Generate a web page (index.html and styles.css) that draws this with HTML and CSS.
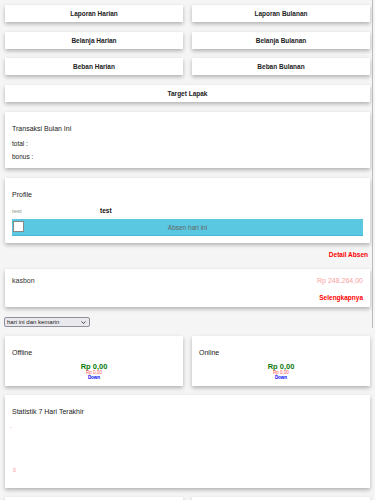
FILE: index.html
```html
<!DOCTYPE html>
<html lang="id">
<head>
  <meta charset="UTF-8">
  <title>Dashboard Lapak</title>
  <link rel="stylesheet" href="styles.css">
</head>
<body>

<div class="page">
  <div class="menu">
    <div class="btn">Laporan Harian</div>
    <div class="btn">Laporan Bulanan</div>
    <div class="btn">Belanja Harian</div>
    <div class="btn">Belanja Bulanan</div>
    <div class="btn">Beban Harian</div>
    <div class="btn">Beban Bulanan</div>
    <div class="btn full">Target Lapak</div>
  </div>

  <div class="card transaksi">
    <div class="card-title">Transaksi Bulan Ini</div>
    <p class="line">total :</p>
    <p class="line">bonus :</p>
  </div>

  <div class="card profile">
    <div class="card-title">Profile</div>
    <div class="profile-row">
      <span class="muted">test</span>
      <span class="name">test</span>
    </div>
    <label class="absen">
      <input type="checkbox" class="check">
      <span>Absen hari ini</span>
    </label>
  </div>

  <div class="link-row"><a href="#" class="red-link">Detail Absen</a></div>

  <div class="card kasbon">
    <div class="kasbon-row">
      <span>kasbon</span>
      <span class="amount">Rp 248.264,00</span>
    </div>
    <div class="kasbon-more"><a href="#" class="red-link">Selengkapnya</a></div>
  </div>

  <div class="filter">
    <select class="range">
      <option>hari ini dan kemarin</option>
      <option>7 hari terakhir</option>
      <option>bulan ini</option>
    </select>
    <svg class="chevron" width="5" height="3" viewBox="0 0 5 3"><path d="M0.5 0.5 L2.5 2.5 L4.5 0.5" fill="none" stroke="#333" stroke-width="0.9"/></svg>
  </div>

  <div class="sales">
    <div class="card sale">
      <div class="card-title">Offline</div>
      <div class="sale-now">Rp 0,00</div>
      <div class="sale-prev">Rp 0,00</div>
      <div class="sale-trend">Down</div>
    </div>
    <div class="card sale">
      <div class="card-title">Online</div>
      <div class="sale-now">Rp 0,00</div>
      <div class="sale-prev">Rp 0,00</div>
      <div class="sale-trend">Down</div>
    </div>
  </div>

  <div class="card stats">
    <div class="card-title">Statistik 7 Hari Terakhir</div>
    <div class="chart">
      <span class="tick top">-</span>
      <span class="tick zero">0</span>
    </div>
  </div>

  <div class="menu bottom">
    <div class="btn">Laporan Lapak</div>
    <div class="btn">Laporan Kantor</div>
    <div class="btn">Data Karyawan</div>
    <div class="btn">Data Produk</div>
    <div class="btn full">Logout</div>
  </div>

  <div class="card filler">
    <div class="card-title">Pengumuman</div>
    <p class="line">-</p>
  </div>
</div>

<div class="scroll-thumb"></div>

</body>
</html>
```

FILE: styles.css
```css
html {
  background: #f5f5f5;
}
body {
  margin: 0;
  font-family: "Liberation Sans", Arial, sans-serif;
  font-size: 7px;
  color: #333;
}
.page {
  padding: 5px 5px 20px;
}
.menu {
  display: grid;
  grid-template-columns: 1fr 1fr;
  column-gap: 9px;
  row-gap: 9.7px;
}
.btn {
  background: #fff;
  height: 17px;
  line-height: 17px;
  text-align: center;
  font-size: 6.5px;
  font-weight: bold;
  color: #222;
  box-shadow: 0 2px 4px rgba(0,0,0,0.28);
}
.btn.full {
  grid-column: span 2;
}
.card {
  background: #fff;
  box-shadow: 0 2px 4px rgba(0,0,0,0.28);
  padding: 12px 7px 5px;
  margin-top: 10px;
}
.card-title {
  line-height: 9px;
  font-size: 7px;
  color: #222;
}
.transaksi .card-title {
  margin-bottom: 4px;
}
.line {
  margin: 0;
  line-height: 13px;
  font-size: 6.5px;
  color: #222;
}
.profile {
  padding-bottom: 7px;
}
.profile-row {
  display: flex;
  margin-top: 7px;
  line-height: 10px;
  font-size: 6.5px;
}
.muted {
  width: 88px;
  color: #8c9c8c;
  font-size: 6px;
}
.name {
  font-weight: bold;
  color: #111;
}
.absen {
  display: flex;
  align-items: center;
  position: relative;
  margin-top: 3px;
  height: 17px;
  background: #5bc8e1;
  border-bottom: 1px solid #4ab7d2;
  box-sizing: border-box;
}
.absen span {
  flex: 1;
  text-align: center;
  color: #666;
  font-size: 6.5px;
}
.check {
  appearance: none;
  position: absolute;
  left: 1px;
  top: 2px;
  margin: 0;
  width: 11px;
  height: 11px;
  background: #fff;
  border: 1px solid #888;
  box-sizing: border-box;
}
.link-row {
  text-align: right;
  padding: 7px 2px 0 0;
  line-height: 9px;
}
.red-link {
  color: #f00;
  font-weight: bold;
  font-size: 6.5px;
  text-decoration: none;
}
.kasbon {
  padding: 7px 7px 5px;
}
.kasbon-row {
  display: flex;
  justify-content: space-between;
  line-height: 9px;
}
.amount {
  color: #f9a0a0;
}
.kasbon-more {
  text-align: right;
  margin-top: 7.5px;
  line-height: 9px;
}
.filter {
  position: relative;
  width: 86px;
  margin: 10px 0 0 -1px;
  height: 10px;
}
.range {
  appearance: none;
  display: block;
  width: 86px;
  height: 10px;
  padding: 0 2px;
  font-family: "Liberation Sans", Arial, sans-serif;
  font-size: 6px;
  line-height: 8px;
  color: #222;
  background: #e9e9ed;
  border: 1px solid #8f8f9d;
  border-radius: 2px;
}
.chevron {
  position: absolute;
  right: 4px;
  top: 4px;
  pointer-events: none;
}
.sales {
  display: grid;
  grid-template-columns: 1fr 1fr;
  column-gap: 9px;
  margin-top: 9px;
}
.sale {
  margin-top: 0;
  padding-bottom: 5.5px;
}
.sale .card-title {
  margin-bottom: 6.5px;
}
.sale-now,
.sale-prev,
.sale-trend {
  text-align: center;
}
.sale-now {
  line-height: 7px;
  font-size: 7.5px;
  font-weight: bold;
  color: #0a7a0a;
}
.sale-prev {
  line-height: 5px;
  font-size: 4.5px;
  color: #f55;
}
.sale-trend {
  line-height: 5px;
  font-size: 4.5px;
  font-weight: bold;
  color: #00f;
}
.stats {
  margin-top: 9px;
  padding-bottom: 8px;
}
.chart {
  position: relative;
  height: 64px;
}
.tick {
  position: absolute;
  color: #f88;
  font-size: 5px;
}
.tick.top {
  left: -2px;
  top: 8px;
}
.tick.zero {
  left: 1px;
  top: 51px;
}
.bottom {
  margin-top: 9px;
}
.filler {
  height: 80px;
}
.scroll-thumb {
  position: fixed;
  top: 0;
  right: 2px;
  width: 1px;
  height: 328px;
  background: #bbb;
}
```
